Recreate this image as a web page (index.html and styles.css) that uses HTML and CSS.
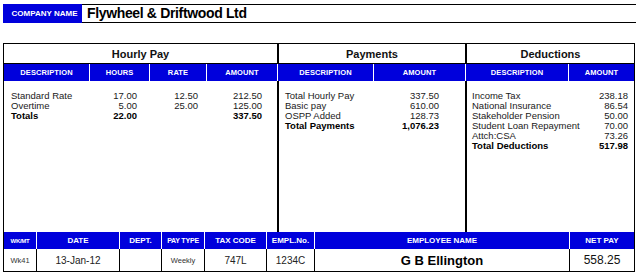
FILE: index.html
```html
<!DOCTYPE html>
<html>
<head>
<meta charset="utf-8">
<link rel="stylesheet" href="styles.css">
</head>
<body>
<div class="company">
  <div class="company-label">COMPANY NAME</div>
  <div class="company-name">Flywheel &amp; Driftwood Ltd</div>
</div>

<div class="slip">
  <div class="sections">
    <div class="section hourly">
      <div class="title">Hourly Pay</div>
      <div class="head">
        <div>DESCRIPTION</div><div>HOURS</div><div>RATE</div><div>AMOUNT</div>
      </div>
      <div class="body">
        <div class="row"><span>Standard Rate</span><span class="num">17.00</span><span class="num">12.50</span><span class="num">212.50</span></div>
        <div class="row"><span>Overtime</span><span class="num">5.00</span><span class="num">25.00</span><span class="num">125.00</span></div>
        <div class="row bold"><span>Totals</span><span class="num">22.00</span><span class="num"></span><span class="num">337.50</span></div>
      </div>
    </div>
    <div class="section payments">
      <div class="title">Payments</div>
      <div class="head">
        <div>DESCRIPTION</div><div>AMOUNT</div>
      </div>
      <div class="body">
        <div class="row"><span>Total Hourly Pay</span><span class="num">337.50</span></div>
        <div class="row"><span>Basic pay</span><span class="num">610.00</span></div>
        <div class="row"><span>OSPP Added</span><span class="num">128.73</span></div>
        <div class="row bold"><span>Total Payments</span><span class="num">1,076.23</span></div>
      </div>
    </div>
    <div class="section deductions">
      <div class="title">Deductions</div>
      <div class="head">
        <div>DESCRIPTION</div><div>AMOUNT</div>
      </div>
      <div class="body">
        <div class="row"><span>Income Tax</span><span class="num">238.18</span></div>
        <div class="row"><span>National Insurance</span><span class="num">86.54</span></div>
        <div class="row"><span>Stakeholder Pension</span><span class="num">50.00</span></div>
        <div class="row"><span>Student Loan Repayment</span><span class="num">70.00</span></div>
        <div class="row"><span>Attch:CSA</span><span class="num">73.26</span></div>
        <div class="row bold"><span>Total Deductions</span><span class="num">517.98</span></div>
      </div>
    </div>
  </div>

  <div class="footer">
    <div class="fh tiny">WK/MT</div>
    <div class="fh">DATE</div>
    <div class="fh">DEPT.</div>
    <div class="fh small">PAY TYPE</div>
    <div class="fh">TAX CODE</div>
    <div class="fh">EMPL.No.</div>
    <div class="fh">EMPLOYEE NAME</div>
    <div class="fh">NET PAY</div>

    <div class="fv v-small">Wk41</div>
    <div class="fv">13-Jan-12</div>
    <div class="fv"></div>
    <div class="fv v-small">Weekly</div>
    <div class="fv">747L</div>
    <div class="fv">1234C</div>
    <div class="fv v-name">G B Ellington</div>
    <div class="fv v-net">558.25</div>
  </div>
</div>
</body>
</html>
```

FILE: styles.css
```css
* { box-sizing: border-box; }
body {
  margin: 0;
  background: #fff;
  font-family: "Liberation Sans", Arial, sans-serif;
  color: #1a1a1a;
  width: 638px;
  height: 275px;
  overflow: hidden;
}

.company {
  display: flex;
  margin: 4px 2px 0 3px;
  height: 19px;
}
.company-label {
  width: 79px;
  background: #0000dc;
  color: #fff;
  font-weight: bold;
  font-size: 8px;
  display: flex;
  align-items: center;
  justify-content: center;
  padding-left: 4px;
}
.company-name {
  flex: 1;
  border-top: 1px solid #000;
  border-bottom: 1px solid #000;
  font-weight: bold;
  font-size: 14px;
  letter-spacing: -0.35px;
  color: #000;
  padding-left: 5px;
  line-height: 17px;
}

.slip {
  margin: 20px 0 0 3px;
  width: 632px;
  border: 1px solid #000;
}

.sections {
  display: grid;
  grid-template-columns: 273px 188px 169px;
}
.section { display: flex; flex-direction: column; }
.section + .section .title,
.section + .section .body { border-left: 2px solid #000; }
.section + .section .head { border-left: 1px solid #fff; }

.title {
  height: 20px;
  font-weight: bold;
  font-size: 11px;
  color: #111;
  display: flex;
  align-items: center;
  justify-content: center;
  border-bottom: 1px solid #000;
}

.head {
  height: 17px;
  background: #0000dc;
  display: grid;
  color: #fff;
  font-weight: bold;
  font-size: 7.5px;
  letter-spacing: 0.1px;
}
.head div {
  display: flex;
  align-items: center;
  justify-content: center;
}
.head div + div { border-left: 1px solid #fff; }
.hourly .head { grid-template-columns: 85px 60px 57px 1fr; }
.payments .head { grid-template-columns: 95px 1fr; }
.deductions .head { grid-template-columns: 102px 1fr; }

.body {
  height: 151px;
  padding-top: 10px;
  font-size: 9.5px;
  line-height: 10px;
}
.row { display: grid; }
.bold { font-weight: bold; color: #000; }
.num { text-align: right; }
.hourly .body { padding-left: 7px; }
.hourly .row { grid-template-columns: 73px 53px 61px 64px; }
.payments .body { padding-left: 6px; }
.payments .row { grid-template-columns: 100px 54px; }
.deductions .body { padding-left: 5px; }
.deductions .row { grid-template-columns: 116px 40px; }

.footer {
  display: grid;
  grid-template-columns: 32px 83px 42px 43px 62px 48px 255px 1fr;
  grid-template-rows: 17px 22px;
}
.fh {
  background: #0000dc;
  color: #fff;
  font-weight: bold;
  font-size: 8px;
  display: flex;
  align-items: center;
  justify-content: center;
}
.fh + .fh { border-left: 1px solid #fff; }
.fh.tiny { font-size: 6px; letter-spacing: -0.3px; }
.fh.small { font-size: 7px; letter-spacing: -0.2px; }
.fv {
  font-size: 10px;
  color: #222;
  display: flex;
  align-items: center;
  justify-content: center;
  border-left: 1px solid #000;
}
.fv:nth-child(9) { border-left: none; }
.fv.v-small { font-size: 7.5px; color: #333; }
.fv.v-name { font-size: 13px; font-weight: bold; color: #000; }
.fv.v-net { font-size: 12px; color: #111; }
```
